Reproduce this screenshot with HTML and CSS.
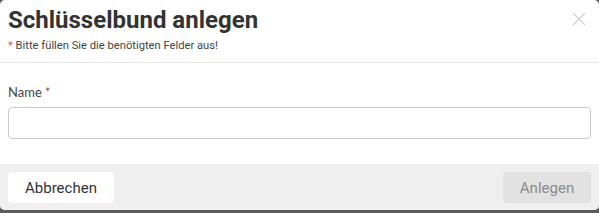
FILE: index.html
```html
<!DOCTYPE html>
<html lang="de">
<head>
    <meta charset="UTF-8">
    <title>Schlüsselbund anlegen</title>
    <link rel="stylesheet" href="styles.css">
</head>
<body>
    <div class="modal">
        <!-- Header -->
        <div class="modal-header">
            <h1 class="title">Schlüsselbund anlegen</h1>
            <p class="hint"><span class="req">*</span> Bitte füllen Sie die benötigten Felder aus!</p>
            <button class="close" aria-label="Schließen">
                <svg width="14" height="14" viewBox="0 0 14 14">
                    <path d="M1 1L13 13M13 1L1 13" stroke="#cfcfcf" stroke-width="1.2" fill="none"/>
                </svg>
            </button>
        </div>

        <!-- Body -->
        <div class="modal-body">
            <label class="label" for="name">Name <span class="req-label">*</span></label>
            <input class="input" id="name" type="text">
        </div>

        <!-- Footer -->
        <div class="modal-footer">
            <button class="btn btn-cancel">Abbrechen</button>
            <button class="btn btn-submit" disabled>Anlegen</button>
        </div>
    </div>
</body>
</html>
```

FILE: styles.css
```css
body {
    margin: 0;
    background-color: #5c5c5c;
    font-family: Roboto, "Liberation Sans", sans-serif;
    height: 213px;
    overflow: hidden;
}

.modal {
    width: 599px;
    height: 210px;
    background-color: #fff;
    border-radius: 5px;
    overflow: hidden;
    display: flex;
    flex-direction: column;
}

/* Header */
.modal-header {
    position: relative;
    padding: 5px 8px 0;
    height: 57px;
    border-bottom: 1px solid #e6e6e6;
}

.title {
    margin: 0;
    font-size: 24px;
    font-weight: 700;
    color: #333;
    line-height: 30px;
}

.hint {
    margin: 4px 0 0;
    font-size: 11.2px;
    color: #444;
}

.req {
    color: #d9534f;
}

.close {
    position: absolute;
    top: 12px;
    right: 13px;
    border: none;
    background: none;
    padding: 0;
    cursor: pointer;
}

/* Body */
.modal-body {
    flex: 1;
    padding: 21px 8px 0;
}

.label {
    display: block;
    font-family: Lato, Roboto, sans-serif;
    font-size: 13px;
    color: #444;
    margin-bottom: 7px;
}

.req-label {
    color: #a94442;
}

.input {
    display: block;
    box-sizing: border-box;
    width: 100%;
    height: 32px;
    border: 1px solid #cacaca;
    border-radius: 4px;
    background: #fff;
}

/* Footer */
.modal-footer {
    background-color: #efefef;
    padding: 8px 8px 7px;
    display: flex;
    justify-content: space-between;
}

.btn {
    height: 31px;
    border: none;
    border-radius: 4px;
    font-family: Roboto, sans-serif;
    font-size: 15px;
    padding: 0;
    cursor: pointer;
}

.btn-cancel {
    background-color: #fff;
    color: #333;
    width: 106px;
}

.btn-submit {
    background-color: #e2e2e2;
    color: #8a8a8a;
    width: 88px;
}
```
